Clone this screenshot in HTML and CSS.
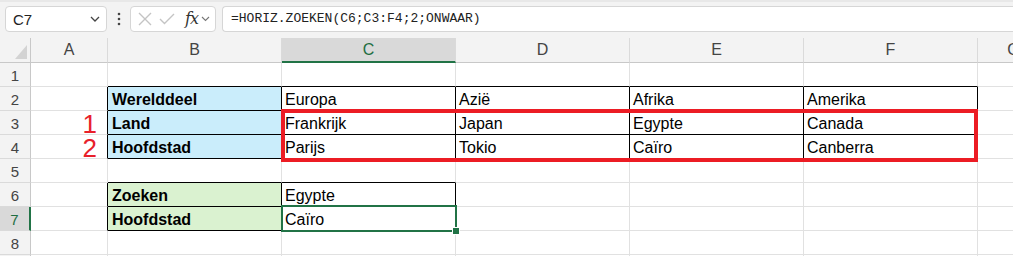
FILE: index.html
```html
<!DOCTYPE html>
<html lang="nl">
<head>
<meta charset="utf-8">
<title>HORIZ.ZOEKEN</title>
<link rel="stylesheet" href="styles.css">
</head>
<body>
<div class="app">
  <div class="toolbar">
    <div class="namebox">
      <span class="nb-text">C7</span>
      <svg class="chev" width="10" height="6" viewBox="0 0 10 6"><path d="M1 1 L5 5 L9 1" fill="none" stroke="#444" stroke-width="1.3"/></svg>
    </div>
    <svg class="dots" width="4" height="14" viewBox="0 0 4 14"><circle cx="2" cy="2" r="1.3" fill="#444"/><circle cx="2" cy="7" r="1.3" fill="#444"/><circle cx="2" cy="12" r="1.3" fill="#444"/></svg>
    <div class="fxbox">
      <svg class="ico" width="14" height="14" viewBox="0 0 14 14"><path d="M1 1 L13 13 M13 1 L1 13" stroke="#c4c4c4" stroke-width="1.4" fill="none"/></svg>
      <svg class="ico" width="16" height="12" viewBox="0 0 16 12"><path d="M1 6 L5.5 10.5 L15 1" stroke="#c4c4c4" stroke-width="1.4" fill="none"/></svg>
      <span class="fx">fx</span>
      <svg class="chev small" width="9" height="6" viewBox="0 0 9 6"><path d="M1 1 L4.5 4.5 L8 1" fill="none" stroke="#777" stroke-width="1.1"/></svg>
    </div>
    <div class="formula">=HORIZ.ZOEKEN(C6;C3:F4;2;ONWAAR)</div>
  </div>

  <div class="sheet">
    <div class="grid">
      <!-- header row -->
      <div class="corner"><svg width="12" height="14" viewBox="0 0 12 14"><polygon points="12,0 12,14 0,14" fill="#d3d3d3"/></svg></div>
      <div class="ch">A</div>
      <div class="ch">B</div>
      <div class="ch sel">C</div>
      <div class="ch">D</div>
      <div class="ch">E</div>
      <div class="ch">F</div>
      <div class="ch">G</div>

      <!-- row 1 -->
      <div class="rh">1</div>
      <div class="c"></div>
      <div class="c bb"></div>
      <div class="c bb"></div>
      <div class="c bb"></div>
      <div class="c bb"></div>
      <div class="c bb"></div>
      <div class="c"></div>

      <!-- row 2 -->
      <div class="rh">2</div>
      <div class="c br"></div>
      <div class="c br bb blue b">Werelddeel</div>
      <div class="c br bb">Europa</div>
      <div class="c br bb">Azië</div>
      <div class="c br bb">Afrika</div>
      <div class="c br bb">Amerika</div>
      <div class="c"></div>

      <!-- row 3 -->
      <div class="rh">3</div>
      <div class="c br num"><span>1</span></div>
      <div class="c br bb blue b">Land</div>
      <div class="c br bb">Frankrijk</div>
      <div class="c br bb">Japan</div>
      <div class="c br bb">Egypte</div>
      <div class="c br bb">Canada</div>
      <div class="c"></div>

      <!-- row 4 -->
      <div class="rh">4</div>
      <div class="c br num"><span>2</span></div>
      <div class="c br bb blue b">Hoofdstad</div>
      <div class="c br bb">Parijs</div>
      <div class="c br bb">Tokio</div>
      <div class="c br bb">Caïro</div>
      <div class="c br bb">Canberra</div>
      <div class="c"></div>

      <!-- row 5 -->
      <div class="rh">5</div>
      <div class="c"></div>
      <div class="c bb"></div>
      <div class="c bb"></div>
      <div class="c"></div>
      <div class="c"></div>
      <div class="c"></div>
      <div class="c"></div>

      <!-- row 6 -->
      <div class="rh">6</div>
      <div class="c br"></div>
      <div class="c br bb green b">Zoeken</div>
      <div class="c br bb">Egypte</div>
      <div class="c"></div>
      <div class="c"></div>
      <div class="c"></div>
      <div class="c"></div>

      <!-- row 7 -->
      <div class="rh sel">7</div>
      <div class="c br"></div>
      <div class="c br bb green b">Hoofdstad</div>
      <div class="c br bb">Caïro</div>
      <div class="c"></div>
      <div class="c"></div>
      <div class="c"></div>
      <div class="c"></div>

      <!-- row 8 -->
      <div class="rh">8</div>
      <div class="c"></div>
      <div class="c"></div>
      <div class="c"></div>
      <div class="c"></div>
      <div class="c"></div>
      <div class="c"></div>
      <div class="c"></div>

      <!-- row 9 (only its top edge is visible) -->
      <div class="rh"></div>
      <div class="c"></div>
      <div class="c"></div>
      <div class="c"></div>
      <div class="c"></div>
      <div class="c"></div>
      <div class="c"></div>
      <div class="c"></div>
    </div>

    <div class="redbox"></div>
    <div class="selection"></div>
    <div class="handle"></div>
  </div>
</div>
</body>
</html>
```

FILE: styles.css
```css
* { box-sizing: border-box; }

html, body {
  margin: 0;
  padding: 0;
  background: #ffffff;
}

body {
  width: 1013px;
  height: 256px;
  overflow: hidden;
  font-family: "Liberation Sans", Arial, sans-serif;
  color: #000;
}

.app {
  display: flex;
  flex-direction: column;
  width: 1013px;
  overflow: hidden;
}

/* ---------- formula bar ---------- */
.toolbar {
  height: 38px;
  background: #f3f3f3;
  border-top: 2px solid #e8e8e8;
  display: flex;
  align-items: flex-start;
  padding: 4px 0 0 5px;
}

.namebox {
  width: 102px;
  height: 26px;
  background: #fff;
  border: 1px solid #d6d6d6;
  border-radius: 4px;
  display: flex;
  align-items: center;
  justify-content: space-between;
  padding: 0 6px 0 7px;
  font-size: 15px;
  color: #222;
}

.dots {
  margin: 6px 9px 0 10px;
}

.fxbox {
  width: 86px;
  height: 26px;
  background: #fff;
  border: 1px solid #d6d6d6;
  border-radius: 4px;
  display: flex;
  align-items: center;
  padding: 0 3px 0 7px;
}

.fxbox .ico:first-child { margin-right: 7px; }
.fxbox .ico:nth-child(2) { margin-right: 10px; }

.fx {
  font-family: "DejaVu Serif", "Liberation Serif", serif;
  font-style: italic;
  font-size: 16px;
  color: #333;
  letter-spacing: -1px;
  margin-right: 3px;
  line-height: 1;
}

.formula {
  flex: 1;
  height: 26px;
  margin-left: 6px;
  background: #fff;
  border: 1px solid #d6d6d6;
  border-right: none;
  border-radius: 4px 0 0 4px;
  padding-left: 8px;
  font-family: "Liberation Mono", "DejaVu Sans Mono", monospace;
  font-size: 13px;
  line-height: 24px;
  color: #222;
}

/* ---------- sheet ---------- */
.sheet {
  position: relative;
  height: 218px;
  overflow: hidden;
}

.grid {
  display: grid;
  grid-template-columns: 31px 77px 174px 174px 174px 174px 174px 72px;
  grid-template-rows: 25px repeat(9, 24px);
}

.corner {
  background: #f3f3f3;
  border-right: 1px solid #c8c8c8;
  border-bottom: 1px solid #c8c8c8;
  display: flex;
  justify-content: flex-end;
  align-items: flex-end;
  padding: 0 3px 3px 0;
}

.ch {
  background: #f3f3f3;
  border-right: 1px solid #dadada;
  border-bottom: 1px solid #c8c8c8;
  text-align: center;
  font-size: 16px;
  line-height: 24px;
  color: #444;
}

.ch.sel {
  background: #d9d9d9;
  color: #1e6e42;
  border-bottom: 2px solid #217346;
}

.rh {
  background: #f3f3f3;
  border-right: 1px solid #c8c8c8;
  border-bottom: 1px solid #dadada;
  text-align: center;
  font-size: 15px;
  line-height: 22px;
  padding-top: 2px;
  color: #444;
}

.rh.sel {
  background: #d9d9d9;
  color: #1e6e42;
  border-right: 2px solid #217346;
}

.c {
  border-right: 1px solid #e1e1e1;
  border-bottom: 1px solid #e1e1e1;
  font-size: 16px;
  line-height: 23px;
  padding: 1px 3px 0 3px;
  white-space: nowrap;
  overflow: visible;
}

.c.br { border-right-color: #000; }
.c.bb { border-bottom-color: #000; }

.c.b { font-weight: bold; padding-left: 4px; }
.c.blue { background: #caedfb; }
.c.green { background: #daf2d0; }

.c.num {
  text-align: right;
  padding: 3px 10px 0 0;
  color: #e8202a;
}

.c.num span {
  display: inline-block;
  font-size: 26px;
  line-height: 20px;
}

/* ---------- overlays ---------- */
.redbox {
  position: absolute;
  left: 281px;
  top: 71px;
  width: 697px;
  height: 53px;
  border: 4px solid #ec1c24;
}

.selection {
  position: absolute;
  left: 281px;
  top: 167px;
  width: 176px;
  height: 27px;
  border: 2px solid #217346;
}

.handle {
  position: absolute;
  left: 452px;
  top: 189px;
  width: 8px;
  height: 8px;
  background: #217346;
  border: 1px solid #fff;
}
```
